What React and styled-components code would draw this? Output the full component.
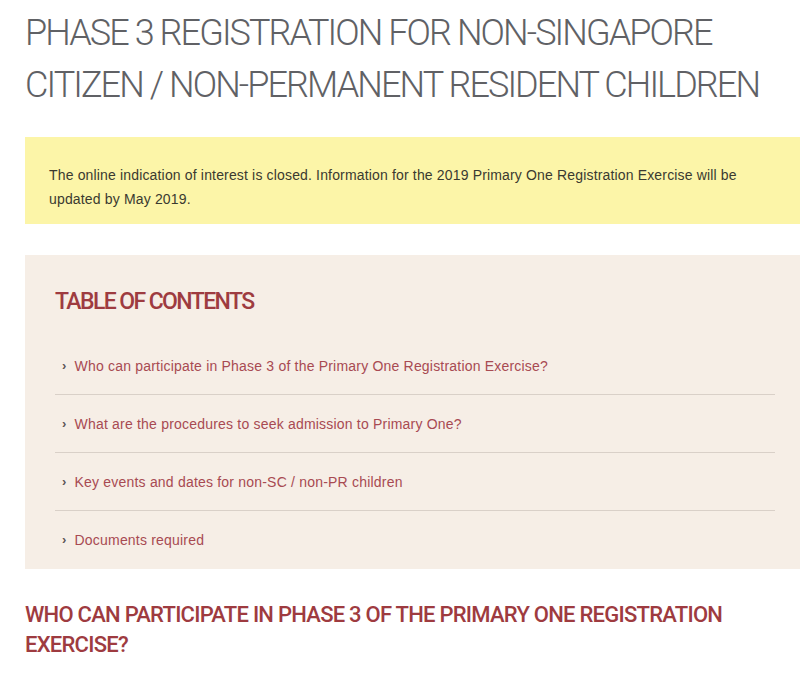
import React from 'react';
import styled, { createGlobalStyle } from 'styled-components';

const GlobalStyle = createGlobalStyle`
    body {
        margin: 0;
        background: #fff;
        font-family: "Liberation Sans", Arial, sans-serif;
    }
`;

const Page = styled.div`
    padding: 7px 0 0 25px;
`;

const Title = styled.h1`
    margin: 0 0 26px 0;
    font-family: Roboto, "Liberation Sans", sans-serif;
    font-weight: 300;
    font-size: 36px;
    line-height: 52px;
    letter-spacing: -1.9px;
    color: #606165;
`;

const Notice = styled.div`
    background: #fcf5a8;
    padding: 26px 60px 13px 24px;
    font-size: 14px;
    line-height: 24px;
    letter-spacing: 0.16px;
    color: #3a3a30;
`;

const Toc = styled.div`
    margin-top: 31px;
    background: #f6eee6;
    padding: 32px 25px 0 30px;
`;

const TocTitle = styled.h2`
    margin: 0 0 20px 0;
    font-family: Roboto, "Liberation Sans", sans-serif;
    font-weight: 500;
    font-size: 23px;
    line-height: 30px;
    letter-spacing: -1.6px;
    color: #9e3b40;
`;

const TocList = styled.ul`
    list-style: none;
    margin: 0;
    padding: 0;
`;

const TocItem = styled.li`
    display: flex;
    align-items: center;
    gap: 8px;
    padding: 18px 0 ${props => (props.last ? '18px' : '17px')} 7px;
    border-bottom: ${props => (props.last ? 'none' : '1px solid #d9d0c8')};
    font-size: 14px;
    line-height: 22px;
    letter-spacing: 0.2px;
`;

const Chevron = styled.span`
    font-size: 13px;
    font-weight: bold;
    color: #5c5555;
    line-height: 22px;
`;

const TocLink = styled.a`
    color: #a84a52;
    text-decoration: none;
`;

const SectionTitle = styled.h2`
    margin: 31px 0 0 0;
    font-family: Roboto, "Liberation Sans", sans-serif;
    font-weight: 500;
    font-size: 22px;
    line-height: 30px;
    letter-spacing: -0.75px;
    color: #9e3b40;
`;

const items = [
    'Who can participate in Phase 3 of the Primary One Registration Exercise?',
    'What are the procedures to seek admission to Primary One?',
    'Key events and dates for non-SC / non-PR children',
    'Documents required',
];

const App = () => {
    return (
        <Page>
            <GlobalStyle />
            <Title>
                PHASE 3 REGISTRATION FOR NON-SINGAPORE<br />
                CITIZEN / NON-PERMANENT RESIDENT CHILDREN
            </Title>
            <Notice>
                The online indication of interest is closed. Information for the 2019 Primary One Registration Exercise will be updated by May 2019.
            </Notice>
            <Toc>
                <TocTitle>TABLE OF CONTENTS</TocTitle>
                <TocList>
                    {items.map((item, index) => (
                        <TocItem key={`toc-${index}`} last={index === items.length - 1}>
                            <Chevron>›</Chevron>
                            <TocLink href="#">{item}</TocLink>
                        </TocItem>
                    ))}
                </TocList>
            </Toc>
            <SectionTitle>
                WHO CAN PARTICIPATE IN PHASE 3 OF THE PRIMARY ONE REGISTRATION<br />
                EXERCISE?
            </SectionTitle>
        </Page>
    );
};

export default App;
